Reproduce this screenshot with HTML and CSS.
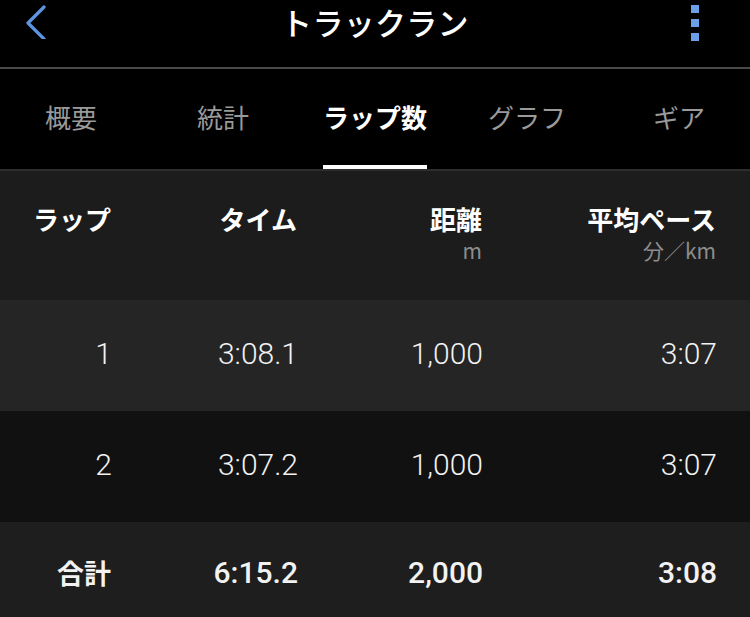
FILE: index.html
```html
<!DOCTYPE html>
<html lang="ja">
<head>
<meta charset="utf-8">
<title>トラックラン</title>
<link rel="stylesheet" href="styles.css">
</head>
<body>
<div class="app">
  <header class="topbar">
    <div class="side left">
      <svg class="back" width="24" height="36" viewBox="0 0 24 36" aria-hidden="true">
        <polyline points="19,4 3,20 19,36" fill="none" stroke="#5e95e3" stroke-width="3.2" stroke-linecap="round" stroke-linejoin="round"/>
      </svg>
    </div>
    <h1 class="title">トラックラン</h1>
    <div class="side right">
      <div class="kebab"><span></span><span></span><span></span></div>
    </div>
  </header>
  <nav class="tabs">
    <div class="tab">概要</div>
    <div class="tab">統計</div>
    <div class="tab active"><span>ラップ数</span></div>
    <div class="tab">グラフ</div>
    <div class="tab">ギア</div>
  </nav>
  <section class="table">
    <div class="row head">
      <div class="cell"><div class="lbl">ラップ</div></div>
      <div class="cell"><div class="lbl">タイム</div></div>
      <div class="cell"><div class="lbl">距離</div><div class="unit">m</div></div>
      <div class="cell"><div class="lbl">平均ペース</div><div class="unit">分／km</div></div>
    </div>
    <div class="row lap odd">
      <div class="cell">1</div>
      <div class="cell">3:08.1</div>
      <div class="cell">1,000</div>
      <div class="cell">3:07</div>
    </div>
    <div class="row lap even">
      <div class="cell">2</div>
      <div class="cell">3:07.2</div>
      <div class="cell">1,000</div>
      <div class="cell">3:07</div>
    </div>
    <div class="row lap total">
      <div class="cell jp">合計</div>
      <div class="cell">6:15.2</div>
      <div class="cell">2,000</div>
      <div class="cell">3:08</div>
    </div>
  </section>
</div>
</body>
</html>
```

FILE: styles.css
```css
* { box-sizing: border-box; }
html, body {
  margin: 0;
  padding: 0;
  background: #000;
  overflow: hidden;
}
body {
  font-family: "Noto Sans CJK JP", "Noto Sans", sans-serif;
  color: #fff;
}
.app {
  width: 750px;
  height: 617px;
  overflow: hidden;
}
.topbar {
  height: 69px;
  border-bottom: 2px solid #4a4a4a;
  display: grid;
  grid-template-columns: 1fr auto 1fr;
  align-items: start;
}
.side {
  display: flex;
}
.side.left {
  padding-left: 25px;
}
.side.right {
  justify-content: flex-end;
  padding-right: 51px;
}
.back {
  margin-top: 3px;
}
.title {
  margin: 2px 0 0;
  font-size: 31px;
  font-weight: 500;
  line-height: 40px;
  letter-spacing: 0.3px;
  white-space: nowrap;
}
.kebab {
  display: flex;
  flex-direction: column;
  gap: 6px;
  margin-top: 5px;
}
.kebab span {
  width: 8px;
  height: 8px;
  background: #6b9fe8;
}
.tabs {
  height: 100px;
  display: grid;
  grid-template-columns: repeat(5, 152px);
  margin: 0 -5px;
}
.tab {
  display: flex;
  align-items: center;
  justify-content: center;
  font-size: 26px;
  color: #9a9a9a;
  padding-bottom: 5px;
}
.tab.active {
  align-items: stretch;
  padding-bottom: 0;
}
.tab.active span {
  display: flex;
  align-items: center;
  color: #fff;
  font-weight: 700;
  border-bottom: 4px solid #fff;
  padding-bottom: 1px;
}
.table {
  border-top: 2px solid #2e2e2e;
}
.row {
  display: grid;
  grid-template-columns: 111px 186px 185px 1fr;
  padding-right: 34px;
}
.cell {
  text-align: right;
}
.head {
  height: 129px;
  background: #1c1c1c;
  padding-top: 31px;
}
.lbl {
  font-size: 26px;
  font-weight: 700;
  line-height: 34px;
  color: #fff;
}
.unit {
  font-size: 21px;
  line-height: 28px;
  color: #8c8c8c;
  font-family: "Noto Sans CJK JP", sans-serif;
}
.lap {
  height: 111px;
  align-items: center;
  font-family: "Roboto", "Noto Sans CJK JP", sans-serif;
  font-size: 30px;
  font-weight: 300;
  color: #f2f2f2;
  padding-bottom: 4px;
  padding-right: 33px;
  grid-template-columns: 112px 186px 185px 1fr;
}
.odd { background: #252525; }
.even { background: #111111; }
.total {
  background: #1e1e1e;
  height: 110px;
  font-weight: 500;
  align-items: start;
  padding-top: 33px;
  padding-bottom: 0;
}
.total .jp {
  font-family: "Noto Sans CJK JP", sans-serif;
  font-weight: 700;
  font-size: 27px;
  line-height: 34px;
  margin-top: 1px;
  margin-right: 1px;
}
```
